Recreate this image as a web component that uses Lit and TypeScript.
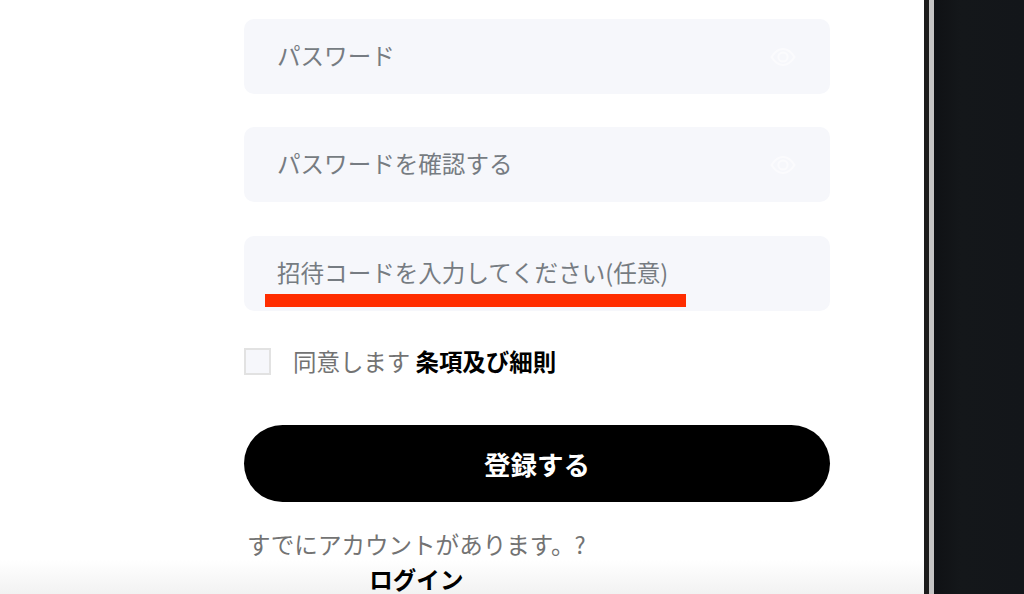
import { LitElement, html, css, svg } from "lit";
import { customElement } from "lit/decorators.js";

const eye = svg`<path d="M1.5 10C5 4.5 8.6 2 13 2s8 2.5 11.5 8C21 15.5 17.4 18 13 18S5 15.5 1.5 10Z"/><circle cx="13" cy="10" r="4.6"/>`;

@customElement("app-root")
export class AppRoot extends LitElement {
  static styles = css`
    :host {
      display: flex;
      width: 1024px;
      height: 594px;
      overflow: hidden;
      background: #14171a;
      font-family: "Noto Sans CJK JP", "Noto Sans", sans-serif;
    }
    .panel {
      position: relative;
      box-sizing: border-box;
      width: 924px;
      height: 594px;
      flex: none;
      background: #fff;
      padding: 19px 0 0 244px;
      overflow: hidden;
    }
    .panel::before {
      content: "";
      position: absolute;
      left: 0;
      right: 0;
      bottom: 0;
      height: 34px;
      background: linear-gradient(#ffffff00, #f2f2f2);
      pointer-events: none;
    }
    .form {
      position: relative;
      width: 586px;
      display: flex;
      flex-direction: column;
    }
    .field {
      position: relative;
      box-sizing: border-box;
      height: 75px;
      margin-bottom: 33.4px;
      padding: 0 34px;
      display: flex;
      align-items: center;
      justify-content: space-between;
      background: #f6f7fb;
      border-radius: 10px;
      color: #767c82;
      font-size: 23.55px;
      line-height: 1;
      white-space: nowrap;
    }
    .field .text {
      position: relative;
      top: -1px;
      left: -1px;
    }
    .eye {
      width: 26px;
      height: 20px;
      fill: none;
      stroke: #fbfbfd;
      stroke-width: 2;
    }
    .mark {
      position: absolute;
      left: 21px;
      top: 58px;
      width: 421px;
      height: 13px;
      background: #ff2d00;
    }
    .agree {
      display: flex;
      align-items: center;
      gap: 22px;
      height: 27px;
      margin-top: 3.6px;
      font-size: 23.45px;
      line-height: 27px;
      white-space: nowrap;
      color: #737373;
    }
    .box {
      box-sizing: border-box;
      width: 27px;
      height: 27px;
      flex: none;
      background: #f6f7fb;
      border: 2px solid #e2e2e2;
    }
    .agree b {
      color: #000;
      font-weight: 700;
    }
    .submit {
      height: 77px;
      margin-top: 50px;
      display: flex;
      align-items: center;
      justify-content: center;
      background: #000;
      color: #fff;
      border-radius: 39px;
      font-size: 26.5px;
      font-weight: 700;
    }
    .login {
      align-self: flex-start;
      margin: 25px 0 0 3px;
      font-size: 23.55px;
      line-height: 35px;
      text-align: center;
      color: #737373;
      white-space: nowrap;
    }
    .login b {
      display: block;
      color: #000;
      font-weight: 700;
    }
    .edge {
      flex: none;
      width: 5px;
      height: 594px;
      background: #1c1c1c;
    }
    .bar {
      flex: none;
      width: 5px;
      height: 594px;
      background: #c4c4c4;
    }
    .dark {
      flex: 1;
      height: 594px;
      background: linear-gradient(90deg, #0f1114, #14171a 30%, #13161a);
    }
  `;

  private field(label: string, hasEye: boolean, mark = false) {
    return html`<div class="field">
      <span class="text">${label}</span>
      ${hasEye ? html`<svg class="eye" viewBox="0 0 26 20">${eye}</svg>` : ""}
      ${mark ? html`<div class="mark"></div>` : ""}
    </div>`;
  }

  render() {
    return html`
      <div class="panel">
        <div class="form">
          ${this.field("パスワード", true)}
          ${this.field("パスワードを確認する", true)}
          ${this.field("招待コードを入力してください(任意)", false, true)}
          <div class="agree">
            <span class="box"></span>
            <span>同意します <b>条項及び細則</b></span>
          </div>
          <div class="submit">登録する</div>
          <div class="login">すでにアカウントがあります。?<b>ログイン</b></div>
        </div>
      </div>
      <div class="edge"></div>
      <div class="bar"></div>
      <div class="dark"></div>
    `;
  }
}
